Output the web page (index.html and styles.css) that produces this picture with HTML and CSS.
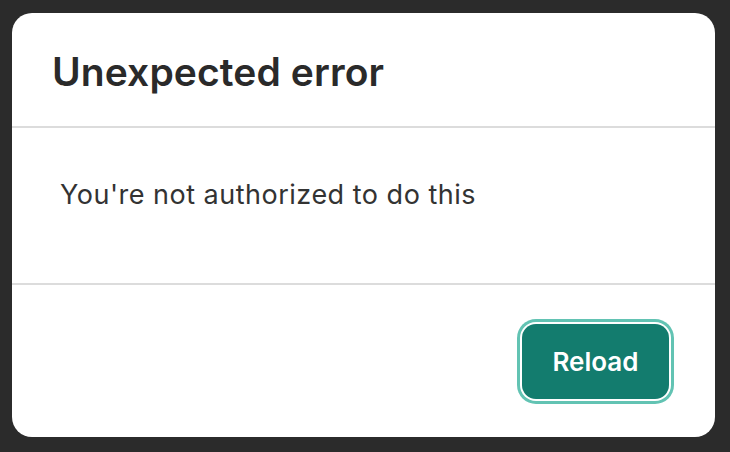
FILE: index.html
```html
<!DOCTYPE html>
<html>
<head>
<meta charset="utf-8">
<link rel="stylesheet" href="styles.css">
</head>
<body>
<div class="dialog">
  <div class="header"><h1 class="title">Unexpected error</h1></div>
  <div class="content"><p class="message">You're not authorized to do this</p></div>
  <div class="footer"><button class="btn">Reload</button></div>
</div>
</body>
</html>
```
FILE: styles.css
```css
html, body {
  margin: 0;
  padding: 0;
  background: #2b2b2b;
  width: 730px;
  height: 452px;
  overflow: hidden;
}
body {
  padding: 13px 0 0 12px;
  box-sizing: border-box;
  font-family: Inter, "Noto Sans", sans-serif;
}
.dialog {
  width: 703px;
  height: 424px;
  background: #fff;
  border-radius: 20px;
  display: flex;
  flex-direction: column;
}
.header {
  height: 115px;
  border-bottom: 2px solid #dcdcdc;
  padding: 35px 0 0 40px;
  box-sizing: border-box;
}
.title {
  margin: 0;
  font-size: 39px;
  line-height: 48px;
  font-weight: 600;
  color: #2a2a2a;
  letter-spacing: 0.1px;
}
.content {
  height: 157px;
  border-bottom: 2px solid #dcdcdc;
  padding-left: 48px;
  box-sizing: border-box;
}
.message {
  margin: 0;
  padding-top: 50px;
  font-size: 27px;
  line-height: 34px;
  color: #333;
  letter-spacing: 0.5px;
}
.footer {
  flex: 1;
  display: flex;
  justify-content: flex-end;
  align-items: flex-start;
  padding: 39px 46px 0 0;
}
.btn {
  width: 147px;
  height: 75px;
  border: none;
  border-radius: 14px;
  background: #137c6e;
  color: #fff;
  font-family: Inter, "Noto Sans", sans-serif;
  font-size: 26px;
  font-weight: 600;
  box-shadow: 0 0 0 2px #fff, 0 0 0 5px #62c3b3;
}
```
